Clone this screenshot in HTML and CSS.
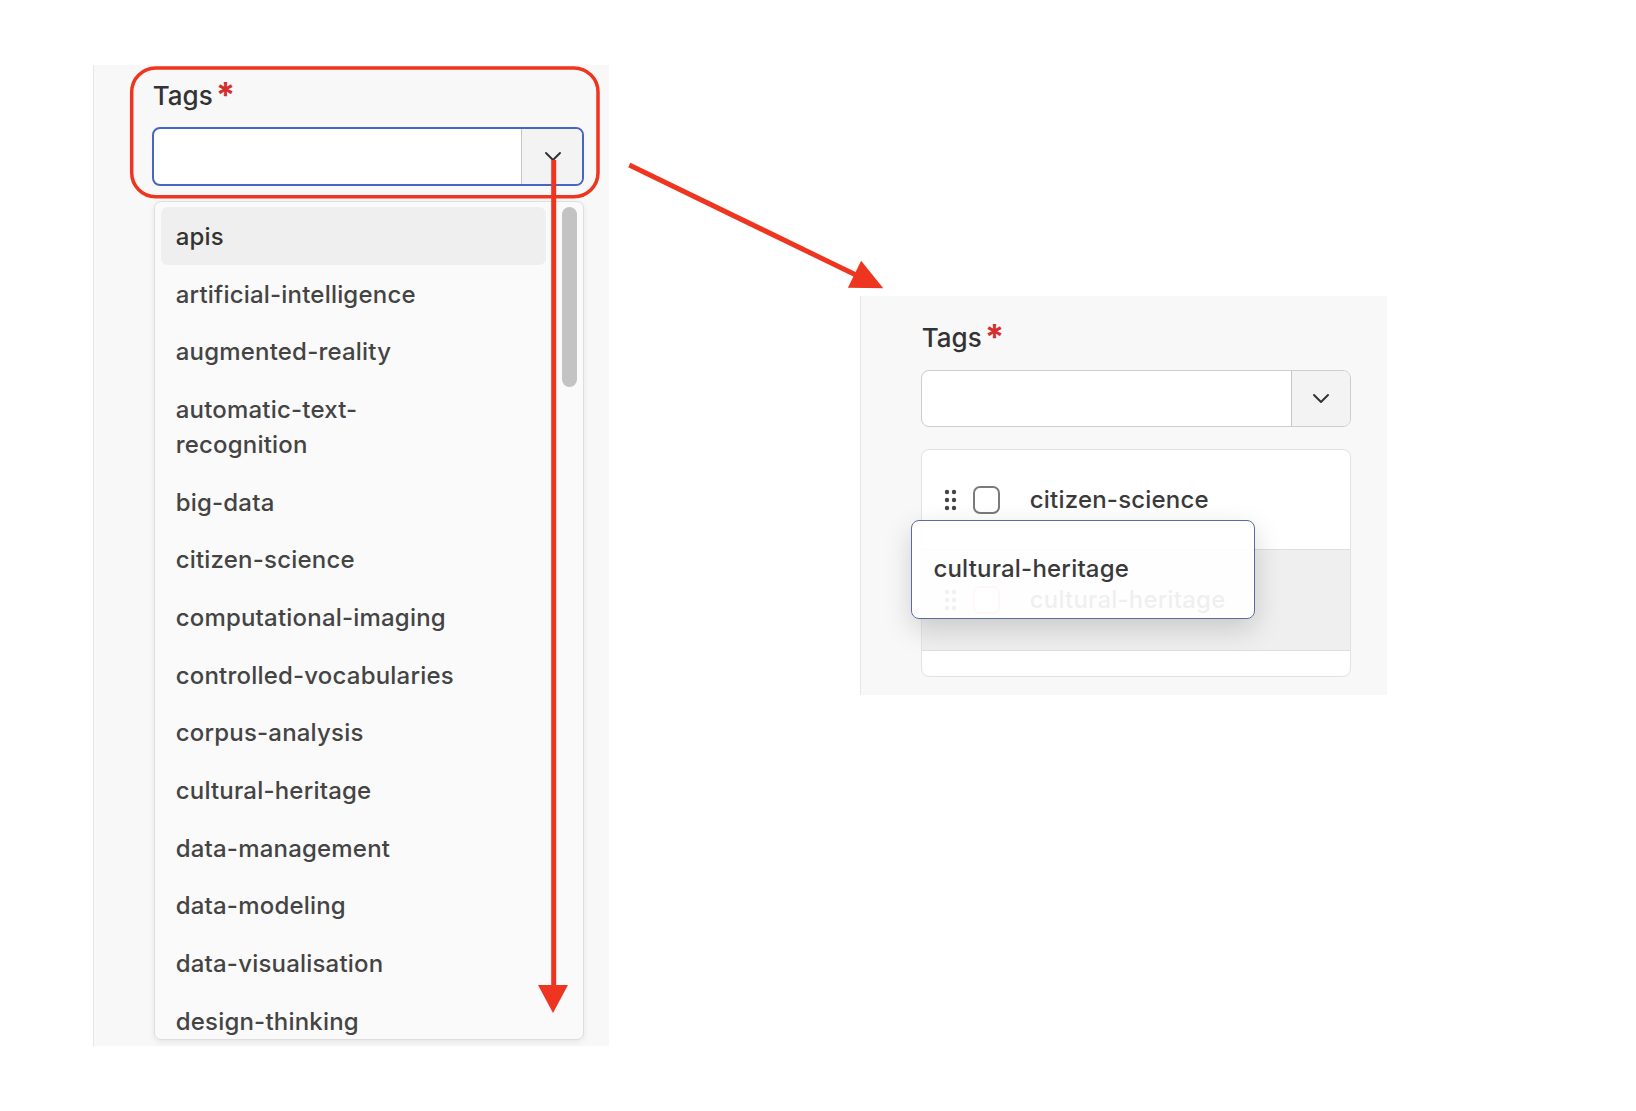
FILE: index.html
```html
<!DOCTYPE html>
<html>
<head>
    <meta name="viewport" content="width=device-width, initial-scale=1.0">
    <link rel="stylesheet" href="styles.css">
</head>
<body>

    <div class="stage">

        <!-- open dropdown -->
        <section class="panel panel-left">
            <div class="field-label">Tags<span class="req">*</span></div>
            <div class="select select-focus">
                <div class="select-value"></div>
                <div class="select-btn">
                    <svg width="18" height="11" viewBox="0 0 18 11"><polyline points="2,2 9,9 16,2" fill="none" stroke="#333" stroke-width="2" stroke-linecap="round" stroke-linejoin="round"/></svg>
                </div>
            </div>
            <div class="menu">
                <ul class="menu-list">
                    <li class="active">apis</li>
                    <li>artificial-intelligence</li>
                    <li>augmented-reality</li>
                    <li>automatic-text-recognition</li>
                    <li>big-data</li>
                    <li>citizen-science</li>
                    <li>computational-imaging</li>
                    <li>controlled-vocabularies</li>
                    <li>corpus-analysis</li>
                    <li>cultural-heritage</li>
                    <li>data-management</li>
                    <li>data-modeling</li>
                    <li>data-visualisation</li>
                    <li>design-thinking</li>
                </ul>
                <div class="menu-scroll"><div class="thumb"></div></div>
            </div>
        </section>

        <!-- reordering selected tags -->
        <section class="panel panel-right">
            <div class="field-label">Tags<span class="req">*</span></div>
            <div class="select">
                <div class="select-value"></div>
                <div class="select-btn">
                    <svg width="18" height="11" viewBox="0 0 18 11"><polyline points="2,2 9,9 16,2" fill="none" stroke="#333" stroke-width="2" stroke-linecap="round" stroke-linejoin="round"/></svg>
                </div>
            </div>
            <div class="card">
                <div class="row">
                    <svg class="grip" width="14" height="22" viewBox="0 0 14 22"><circle cx="3" cy="3" r="2.2"/><circle cx="10" cy="3" r="2.2"/><circle cx="3" cy="11" r="2.2"/><circle cx="10" cy="11" r="2.2"/><circle cx="3" cy="19" r="2.2"/><circle cx="10" cy="19" r="2.2"/></svg>
                    <span class="check"></span>
                    <span class="row-text">citizen-science</span>
                </div>
                <div class="row row-placeholder">
                    <div class="ghost">
                        <svg class="grip" width="14" height="22" viewBox="0 0 14 22"><circle cx="3" cy="3" r="2.2"/><circle cx="10" cy="3" r="2.2"/><circle cx="3" cy="11" r="2.2"/><circle cx="10" cy="11" r="2.2"/><circle cx="3" cy="19" r="2.2"/><circle cx="10" cy="19" r="2.2"/></svg>
                        <span class="check check-ghost"></span>
                        <span class="row-text">cultural-heritage</span>
                    </div>
                </div>
                <div class="card-foot"></div>

                <div class="drag-preview">cultural-heritage</div>
            </div>
        </section>
    </div>

    <!-- red annotations drawn over the screenshot -->
    <svg class="notes" width="1636" height="1111" viewBox="0 0 1636 1111">
        <rect x="131.7" y="68" width="466.3" height="128.7" rx="24" fill="none" stroke="#ee3520" stroke-width="3.5"/>
        <line x1="553.7" y1="160" x2="553.7" y2="988" stroke="#ee3520" stroke-width="5"/>
        <polygon points="538,985 568,985 553,1013" fill="#ee3520"/>
        <line x1="629.3" y1="165" x2="856" y2="275" stroke="#ee3520" stroke-width="5"/>
        <polygon points="883.3,288.3 847.9,287.8 861.1,260.8" fill="#ee3520"/>
    </svg>

</body>
</html>
```

FILE: styles.css
```css
        html, body {
            margin: 0;
            padding: 0;
            background-color: #ffffff;
        }
        body {
            width: 1636px;
            height: 1111px;
            position: relative;
            overflow: hidden;
            font-family: Inter, "Noto Sans", sans-serif;
            color: #404040;
        }

        .stage {
            display: flex;
            align-items: flex-start;
            padding: 65px 0 0 92.7px;
        }

        .panel {
            background-color: #f8f8f8;
            border-left: 1.5px solid #e6e6e6;
            box-sizing: border-box;
        }

        .panel-left {
            width: 516px;
            height: 981px;
            padding-left: 58px;
        }

        .panel-right {
            width: 527px;
            height: 399px;
            margin-left: 251px;
            margin-top: 231px;
            padding-left: 60px;
        }

        .field-label {
            font-size: 26px;
            font-weight: 500;
            line-height: 34px;
            color: #333;
            padding-left: 1px;
        }
        .panel-left .field-label {
            margin-top: 14px;
            margin-bottom: 13.5px;
        }
        .panel-right .field-label {
            margin-top: 24.5px;
            margin-bottom: 15.5px;
        }
        .req {
            color: #d32f2f;
            margin-left: 3px;
            font-size: 35px;
            font-weight: 700;
            line-height: 0;
            position: relative;
            top: 3px;
        }

        /* select box */
        .select {
            display: flex;
            width: 430px;
            height: 57px;
            border: 1px solid #cdcdcd;
            border-radius: 8px;
            background-color: white;
            box-sizing: border-box;
            overflow: hidden;
        }
        .select-focus {
            width: 432px;
            height: 59.3px;
            border: 2px solid #4766c4;
        }
        .select-value {
            flex: 1;
        }
        .select-btn {
            width: 58px;
            background-color: #f3f3f3;
            border-left: 1px solid #c6c6c6;
            display: flex;
            align-items: center;
            justify-content: center;
        }
        .select-focus .select-btn {
            padding-left: 2px;
        }

        /* dropdown menu */
        .menu {
            display: flex;
            width: 430px;
            height: 839px;
            margin: 15.7px 0 0 2px;
            background-color: #fafafa;
            border: 1px solid #dedede;
            border-radius: 7px;
            box-shadow: 0 2px 6px rgba(0, 0, 0, 0.08);
            box-sizing: border-box;
            overflow: hidden;
        }
        .menu-list {
            flex: 1;
            list-style: none;
            margin: 0;
            padding: 5px 0 0 6px;
        }
        .menu-list li {
            font-size: 24px;
            font-weight: 500;
            letter-spacing: 0.2px;
            line-height: 35px;
            padding: 11.35px 70px 11.35px 15px;
            border-radius: 7px;
            color: #444;
        }
        .menu-list li.active {
            background-color: #efefef;
            color: #333;
        }
        .menu-scroll {
            width: 37px;
            padding: 5px 6px 0 16px;
            box-sizing: border-box;
        }
        .thumb {
            width: 15px;
            height: 180px;
            border-radius: 8px;
            background-color: #c3c3c3;
        }

        /* selected tags list */
        .card {
            position: relative;
            width: 430px;
            height: 228px;
            margin-top: 22.3px;
            background-color: white;
            border: 1px solid #e2e2e2;
            border-radius: 8px;
            box-sizing: border-box;
        }
        .row {
            height: 99px;
            display: flex;
            align-items: center;
            padding-left: 22px;
        }
        .row-placeholder {
            height: 101.4px;
            padding-left: 0;
            background-color: #efefef;
            border-top: 1px solid #dedede;
            border-bottom: 1px solid #dedede;
            box-sizing: border-box;
        }
        .ghost {
            display: flex;
            align-items: center;
            padding-left: 22px;
            opacity: 0.8;
        }
        .grip {
            fill: #444;
        }
        .check {
            width: 27.6px;
            height: 27.6px;
            margin-left: 15px;
            border: 2.5px solid #7a7a7a;
            border-radius: 7px;
            box-sizing: border-box;
            background-color: white;
        }
        .check-ghost {
            border-color: #e9a0a0;
        }
        .row-text {
            margin-left: 29.5px;
            font-size: 24px;
            font-weight: 500;
            letter-spacing: 0.2px;
            color: #3a3a3a;
        }

        .drag-preview {
            position: absolute;
            left: -11px;
            top: 69.7px;
            width: 344px;
            height: 99.3px;
            padding: 29.8px 0 0 21.7px;
            box-sizing: border-box;
            background-color: rgba(255, 255, 255, 0.9);
            border: 1px solid #5b6b9e;
            border-radius: 8px;
            box-shadow: 0 10px 28px rgba(0, 0, 0, 0.16);
            font-size: 24px;
            font-weight: 500;
            letter-spacing: 0.2px;
            line-height: 35px;
            color: #3a3a3a;
        }

        .notes {
            position: absolute;
            left: 0;
            top: 0;
            pointer-events: none;
        }
```
